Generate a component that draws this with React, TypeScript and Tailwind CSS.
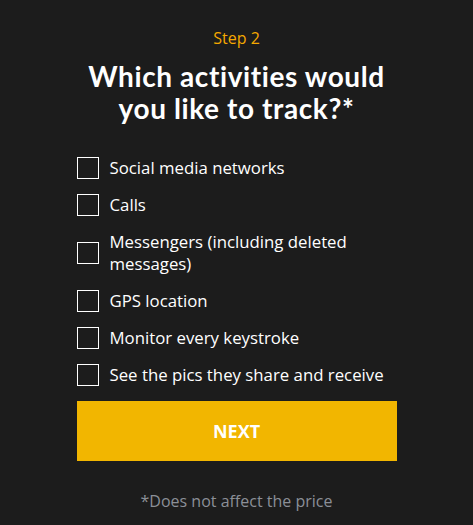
const items = [
  'Social media networks',
  'Calls',
  'Messengers (including deleted messages)',
  'GPS location',
  'Monitor every keystroke',
  'See the pics they share and receive',
];

export default function App() {
  return (
    <div className="min-h-[525px] bg-[#1c1c1c] font-['Open_Sans',sans-serif] flex justify-center">
      <div className="w-[320px] flex flex-col pt-[26px]">
        <p className="text-center text-[16px] leading-[24px] text-[#f5a800]">Step 2</p>
        <h1 className="mt-[10px] text-center font-['Lato',sans-serif] text-[28px] leading-[32px] font-bold text-white tracking-[0.6px]">
          Which activities would you like to track?*
        </h1>
        <ul className="mt-[33px] flex flex-col gap-[15px]">
          {items.map((label) => (
            <li key={label} className="flex items-center gap-[11px]">
              <span className="w-[22px] h-[22px] shrink-0 border border-white" />
              <span className="text-[16.8px] leading-[22px] text-white">{label}</span>
            </li>
          ))}
        </ul>
        <button className="mt-[15px] h-[60px] bg-[#f2b600] text-white text-[18px] font-bold">NEXT</button>
        <p className="mt-[29px] text-center text-[16px] leading-[22px] text-[#8b8f97]">*Does not affect the price</p>
      </div>
    </div>
  );
}
